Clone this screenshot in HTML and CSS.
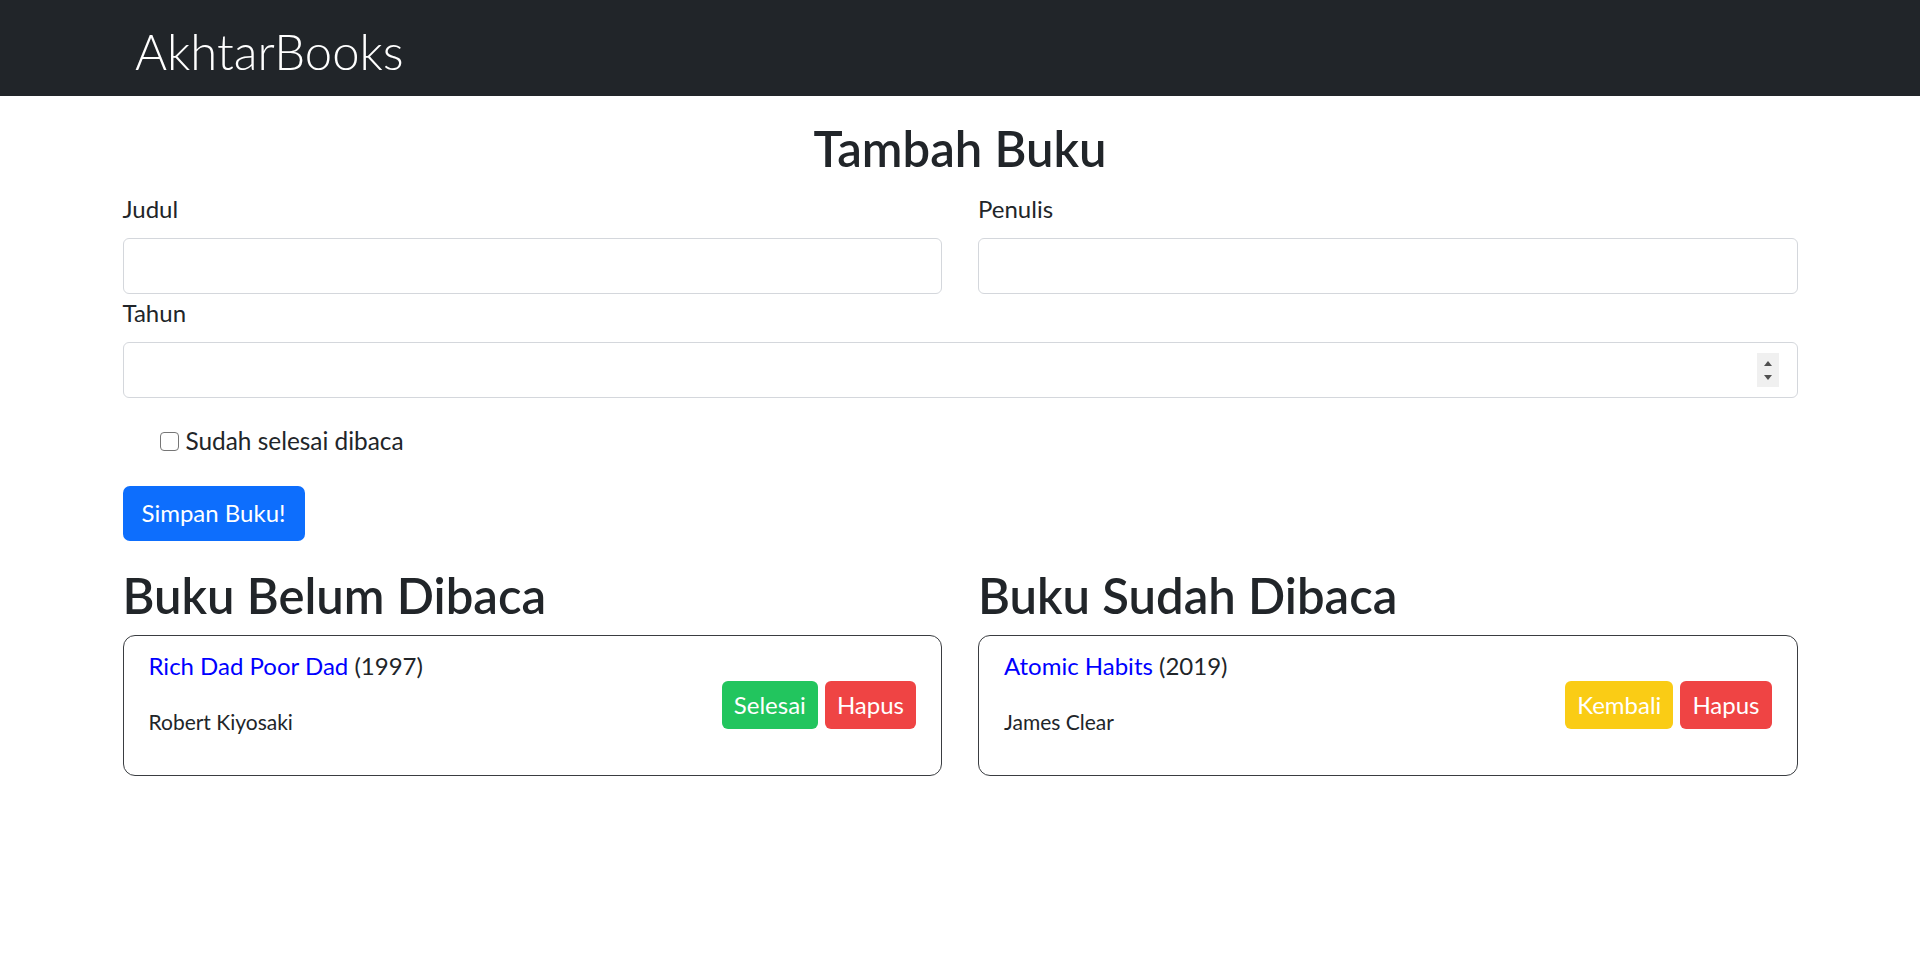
FILE: index.html
```html
<!DOCTYPE html>
<html lang="id">
<head>
<meta charset="utf-8">
<title>AkhtarBooks</title>
<link rel="stylesheet" href="styles.css">
</head>
<body>
<nav class="navbar">
  <span class="brand">AkhtarBooks</span>
</nav>
<main class="container">
  <h1 class="page-title">Tambah Buku</h1>
  <form class="book-form">
    <div class="form-row">
      <div class="field">
        <label class="form-label" for="judul">Judul</label>
        <input class="form-control" id="judul" type="text">
      </div>
      <div class="field">
        <label class="form-label" for="penulis">Penulis</label>
        <input class="form-control" id="penulis" type="text">
      </div>
    </div>
    <div class="field field-year">
      <label class="form-label" for="tahun">Tahun</label>
      <div class="input-wrap">
        <input class="form-control" id="tahun" type="number">
        <span class="spin" aria-hidden="true">
          <svg width="10" height="7" viewBox="0 0 10 7"><path d="M5 1 L9 6 L1 6 Z" fill="#505050"/></svg>
          <svg width="10" height="7" viewBox="0 0 10 7"><path d="M1 1 L9 1 L5 6 Z" fill="#505050"/></svg>
        </span>
      </div>
    </div>
    <div class="form-check">
      <input class="check-input" id="selesai" type="checkbox">
      <label class="check-label" for="selesai">Sudah selesai dibaca</label>
    </div>
    <button class="btn btn-primary" type="button">Simpan Buku!</button>
  </form>
  <section class="shelves">
    <div class="shelf">
      <h2 class="shelf-title">Buku Belum Dibaca</h2>
      <div class="book-card">
        <div class="book-info">
          <p class="book-title"><a href="#" class="book-link">Rich Dad Poor Dad</a> (1997)</p>
          <p class="book-author">Robert Kiyosaki</p>
        </div>
        <div class="book-actions">
          <button class="btn btn-sm btn-green" type="button">Selesai</button>
          <button class="btn btn-sm btn-red" type="button">Hapus</button>
        </div>
      </div>
    </div>
    <div class="shelf">
      <h2 class="shelf-title">Buku Sudah Dibaca</h2>
      <div class="book-card">
        <div class="book-info">
          <p class="book-title"><a href="#" class="book-link">Atomic Habits</a> (2019)</p>
          <p class="book-author">James Clear</p>
        </div>
        <div class="book-actions">
          <button class="btn btn-sm btn-yellow" type="button">Kembali</button>
          <button class="btn btn-sm btn-red" type="button">Hapus</button>
        </div>
      </div>
    </div>
  </section>
</main>
</body>
</html>
```

FILE: styles.css
```css
* { box-sizing: border-box; }

html, body {
  margin: 0;
  padding: 0;
  background: #ffffff;
}

body {
  font-family: Lato, "Open Sans", sans-serif;
  font-size: 24px;
  line-height: 1.5;
  color: #212529;
}

.navbar {
  height: 96px;
  background: #212529;
  display: flex;
  align-items: center;
  padding: 6px 0 0 135px;
}

.brand {
  color: #ffffff;
  font-size: 49px;
  font-weight: 300;
  line-height: 1.2;
}

.container {
  max-width: 1675px;
  margin: 0 auto;
}

.page-title {
  margin: 22px 0 13px;
  text-align: center;
  font-size: 49px;
  font-weight: 600;
  line-height: 60px;
}

.form-row {
  display: grid;
  grid-template-columns: 1fr 1fr;
  column-gap: 36px;
}

.field {
  display: flex;
  flex-direction: column;
}

.field-year {
  margin-top: 1px;
}

.form-label {
  margin-bottom: 11px;
}

.input-wrap {
  position: relative;
  display: flex;
  flex-direction: column;
}

.form-control {
  height: 56px;
  padding: 0 18px;
  font-family: inherit;
  font-size: 24px;
  color: #212529;
  background: #ffffff;
  border: 1px solid #d4d7dc;
  border-radius: 6px;
  outline: none;
}

.form-control::-webkit-inner-spin-button,
.form-control::-webkit-outer-spin-button {
  -webkit-appearance: none;
  margin: 0;
}

.spin {
  position: absolute;
  right: 19px;
  top: 11px;
  width: 22px;
  height: 34px;
  background: #f0f0f0;
  display: flex;
  flex-direction: column;
  align-items: center;
  justify-content: space-around;
  padding: 3px 0;
}

.spin svg {
  display: block;
}

.form-check {
  display: flex;
  align-items: center;
  margin: 25px 0 26px 37px;
}

.check-input {
  width: 19px;
  height: 19px;
  margin: 0 7px 0 0;
  appearance: none;
  border: 1.5px solid #767676;
  border-radius: 4px;
  background: #ffffff;
}

.check-label {
  font-size: 24.4px;
}

.btn {
  font-family: inherit;
  font-size: 24px;
  line-height: 1.5;
  color: #ffffff;
  border: none;
  border-radius: 7px;
  cursor: pointer;
}

.btn-primary {
  background: #0d6efd;
  padding: 9.5px 19px;
}

.shelves {
  display: grid;
  grid-template-columns: 1fr 1fr;
  column-gap: 36px;
  margin-top: 24px;
}

.shelf-title {
  margin: 0 0 10px;
  font-size: 49px;
  font-weight: 600;
  line-height: 60px;
}

.book-card {
  display: flex;
  align-items: center;
  justify-content: space-between;
  border: 1px solid #3a3d41;
  border-radius: 12px;
  padding: 12px 25px 0 25px;
  min-height: 141px;
}

.book-info {
  align-self: flex-start;
}

.book-title {
  margin: 0 0 22px;
  font-size: 24px;
  line-height: 1.5;
}

.book-link {
  color: #0000ff;
  text-decoration: none;
}

.book-author {
  margin: 0 0 37px;
  font-size: 21px;
  line-height: 1.5;
}

.book-actions {
  display: flex;
  gap: 7px;
  margin-top: -12px;
}

.btn-sm {
  padding: 6px 12px;
  border-radius: 6px;
}

.btn-green { background: #22c55e; }
.btn-red { background: #ef4444; }
.btn-yellow { background: #facc15; }
```
